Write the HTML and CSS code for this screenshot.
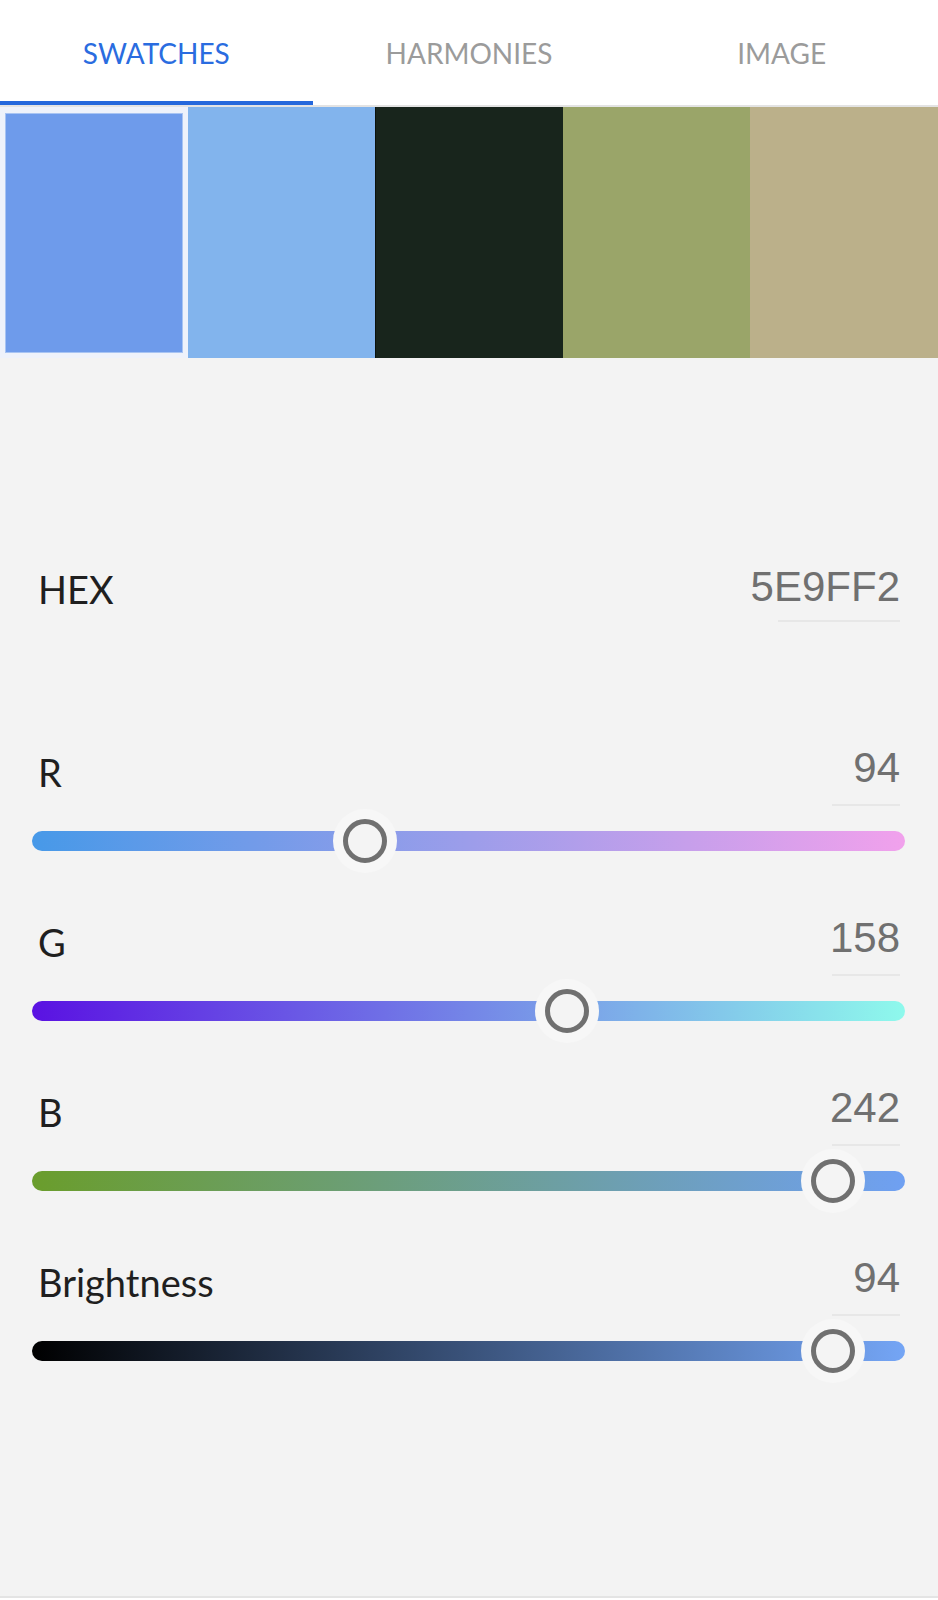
FILE: index.html
```html
<!DOCTYPE html>
<html lang="en">
<head>
  <meta charset="UTF-8" />
  <title>Color</title>
  <link rel="stylesheet" href="styles.css">
</head>
<body>
  <div class="tabs">
    <div class="tab active">SWATCHES</div>
    <div class="tab">HARMONIES</div>
    <div class="tab">IMAGE</div>
  </div>

  <div class="swatches">
    <div class="swatch selected"><div class="fill c1"></div></div>
    <div class="swatch"><div class="fill c2"></div></div>
    <div class="swatch"><div class="fill c3"></div></div>
    <div class="swatch"><div class="fill c4"></div></div>
    <div class="swatch"><div class="fill c5"></div></div>
  </div>

  <div class="panel">
    <div class="field hex">
      <div class="label">HEX</div>
      <div class="value">5E9FF2</div>
    </div>

    <div class="slider-row">
      <div class="field">
        <div class="label">R</div>
        <div class="value">94</div>
      </div>
      <div class="track-wrap">
        <div class="track red"></div>
        <div class="knob" style="left: 38.1%"></div>
      </div>
    </div>

    <div class="slider-row">
      <div class="field">
        <div class="label">G</div>
        <div class="value">158</div>
      </div>
      <div class="track-wrap">
        <div class="track green"></div>
        <div class="knob" style="left: 61.3%"></div>
      </div>
    </div>

    <div class="slider-row">
      <div class="field">
        <div class="label">B</div>
        <div class="value">242</div>
      </div>
      <div class="track-wrap">
        <div class="track blue"></div>
        <div class="knob" style="left: 91.8%"></div>
      </div>
    </div>

    <div class="slider-row">
      <div class="field">
        <div class="label">Brightness</div>
        <div class="value">94</div>
      </div>
      <div class="track-wrap">
        <div class="track bright"></div>
        <div class="knob" style="left: 91.8%"></div>
      </div>
    </div>
  </div>
</body>
</html>
```

FILE: styles.css
```css
body {
  margin: 0;
  background: #fff;
  font-family: Lato, "Open Sans", sans-serif;
}

/* tab bar */
.tabs {
  display: flex;
  height: 105px;
  background: #fff;
  border-bottom: 2px solid #e3e3e3;
}

.tab {
  flex: 1;
  display: flex;
  align-items: center;
  justify-content: center;
  padding-top: 4px;
  font-size: 28px;
  color: #9b9b9b;
  border-bottom: 4px solid transparent;
}

.tab.active {
  color: #2a6ce0;
  border-bottom-color: #2568dc;
}

/* swatch strip */
.swatches {
  display: flex;
  height: 251px;
}

.swatch {
  box-sizing: border-box;
  flex: 0 0 20%;
  display: flex;
}

.swatch.selected {
  padding: 6px 5px 5px 5px;
  background: #eef2fb;
}

.fill {
  flex: 1;
}

.selected .fill {
  border: 1px solid #a8c4f3;
}

.c1 { background: #6e9beb; }
.c2 { background: #82b4ed; }
.c3 { background: #18251c; border-left: 1px solid #0b120d; }
.c4 { background: #9aa569; }
.c5 { background: #bbb08a; }

/* editor panel */
.panel {
  box-sizing: border-box;
  height: 1240px;
  padding: 205px 33px 0 32px;
  background: #f3f3f3;
  border-bottom: 2px solid #e4e4e4;
}

.field {
  display: flex;
  justify-content: space-between;
  align-items: flex-start;
  padding: 0 5px 0 6px;
}

.label {
  margin-top: 2px;
  font-size: 38px;
  line-height: 48px;
  color: #1f1f1f;
}

.value {
  display: flex;
  justify-content: flex-end;
  white-space: nowrap;
  width: 122px;
  padding-bottom: 9px;
  font-family: "Liberation Sans", Arial, sans-serif;
  font-size: 42px;
  line-height: 48px;
  color: #707070;
  border-bottom: 2px solid #e7e7e7;
}

.hex {
  margin-bottom: 122px;
}

.slider-row {
  margin-bottom: 41px;
}

.slider-row .label {
  margin-top: 4px;
}

.slider-row .value {
  width: 68px;
  padding-bottom: 12px;
}

.track-wrap {
  position: relative;
  display: flex;
  align-items: center;
  height: 64px;
  margin-top: 3px;
}

.track {
  flex: 1;
  height: 20px;
  border-radius: 10px;
}

.track.red { background: linear-gradient(to right, #4799e8, #f1a1ec); }
.track.green { background: linear-gradient(to right, #5a12e2, #8ef9ec); }
.track.blue { background: linear-gradient(to right, #6a9d2c, #6fa0f2); }
.track.bright { background: linear-gradient(to right, #000, #74a5f5); }

.knob {
  position: absolute;
  top: 0;
  width: 64px;
  height: 64px;
  margin-left: -32px;
  border-radius: 50%;
  background: #f7f7f7;
  display: flex;
  align-items: center;
  justify-content: center;
}

.knob::after {
  content: "";
  width: 34px;
  height: 34px;
  border: 5px solid #707070;
  border-radius: 50%;
  background: #f4f4f4;
}
```
